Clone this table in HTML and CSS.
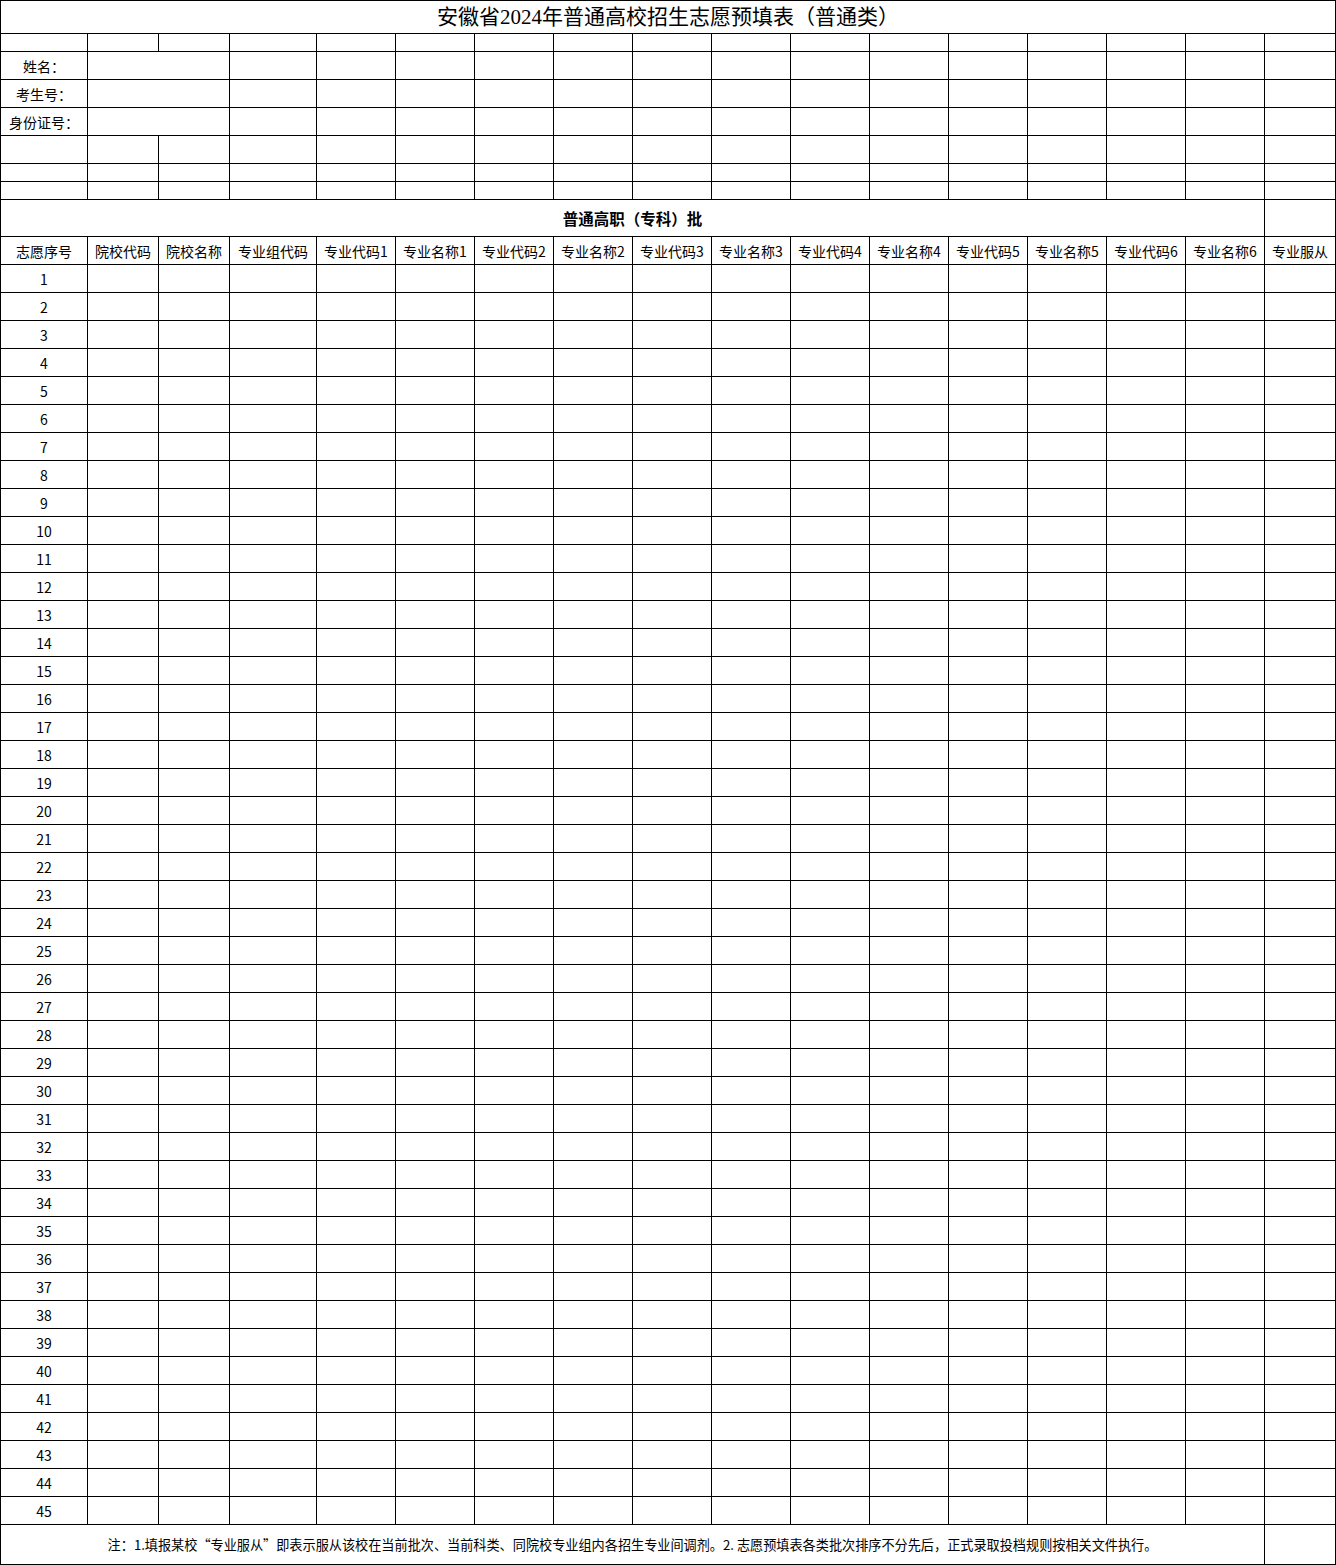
FILE: index.html
```html
<!DOCTYPE html>
<html lang="zh-CN">
<head>
<meta charset="utf-8">
<title>安徽省2024年普通高校招生志愿预填表（普通类）</title>
<link rel="stylesheet" href="styles.css">
</head>
<body>
<div class="sheet">
<span class="title">安徽省2024年普通高校招生志愿预填表（普通类）</span>
<span></span><span></span><span></span><span></span><span></span><span></span><span></span><span></span><span></span><span></span><span></span><span></span><span></span><span></span><span></span><span></span><span></span>
<span>姓名：</span><span class="w2"></span><span></span><span></span><span></span><span></span><span></span><span></span><span></span><span></span><span></span><span></span><span></span><span></span><span></span><span></span>
<span>考生号：</span><span class="w2"></span><span></span><span></span><span></span><span></span><span></span><span></span><span></span><span></span><span></span><span></span><span></span><span></span><span></span><span></span>
<span>身份证号：</span><span class="w2"></span><span></span><span></span><span></span><span></span><span></span><span></span><span></span><span></span><span></span><span></span><span></span><span></span><span></span><span></span>
<span></span><span></span><span></span><span></span><span></span><span></span><span></span><span></span><span></span><span></span><span></span><span></span><span></span><span></span><span></span><span></span><span></span>
<span></span><span></span><span></span><span></span><span></span><span></span><span></span><span></span><span></span><span></span><span></span><span></span><span></span><span></span><span></span><span></span><span></span>
<span></span><span></span><span></span><span></span><span></span><span></span><span></span><span></span><span></span><span></span><span></span><span></span><span></span><span></span><span></span><span></span><span></span>
<span class="batch">普通高职（专科）批</span><span></span>
<span>志愿序号</span><span>院校代码</span><span>院校名称</span><span>专业组代码</span><span>专业代码1</span><span>专业名称1</span><span>专业代码2</span><span>专业名称2</span><span>专业代码3</span><span>专业名称3</span><span>专业代码4</span><span>专业名称4</span><span>专业代码5</span><span>专业名称5</span><span>专业代码6</span><span>专业名称6</span><span>专业服从</span>
<span>1</span><span></span><span></span><span></span><span></span><span></span><span></span><span></span><span></span><span></span><span></span><span></span><span></span><span></span><span></span><span></span><span></span>
<span>2</span><span></span><span></span><span></span><span></span><span></span><span></span><span></span><span></span><span></span><span></span><span></span><span></span><span></span><span></span><span></span><span></span>
<span>3</span><span></span><span></span><span></span><span></span><span></span><span></span><span></span><span></span><span></span><span></span><span></span><span></span><span></span><span></span><span></span><span></span>
<span>4</span><span></span><span></span><span></span><span></span><span></span><span></span><span></span><span></span><span></span><span></span><span></span><span></span><span></span><span></span><span></span><span></span>
<span>5</span><span></span><span></span><span></span><span></span><span></span><span></span><span></span><span></span><span></span><span></span><span></span><span></span><span></span><span></span><span></span><span></span>
<span>6</span><span></span><span></span><span></span><span></span><span></span><span></span><span></span><span></span><span></span><span></span><span></span><span></span><span></span><span></span><span></span><span></span>
<span>7</span><span></span><span></span><span></span><span></span><span></span><span></span><span></span><span></span><span></span><span></span><span></span><span></span><span></span><span></span><span></span><span></span>
<span>8</span><span></span><span></span><span></span><span></span><span></span><span></span><span></span><span></span><span></span><span></span><span></span><span></span><span></span><span></span><span></span><span></span>
<span>9</span><span></span><span></span><span></span><span></span><span></span><span></span><span></span><span></span><span></span><span></span><span></span><span></span><span></span><span></span><span></span><span></span>
<span>10</span><span></span><span></span><span></span><span></span><span></span><span></span><span></span><span></span><span></span><span></span><span></span><span></span><span></span><span></span><span></span><span></span>
<span>11</span><span></span><span></span><span></span><span></span><span></span><span></span><span></span><span></span><span></span><span></span><span></span><span></span><span></span><span></span><span></span><span></span>
<span>12</span><span></span><span></span><span></span><span></span><span></span><span></span><span></span><span></span><span></span><span></span><span></span><span></span><span></span><span></span><span></span><span></span>
<span>13</span><span></span><span></span><span></span><span></span><span></span><span></span><span></span><span></span><span></span><span></span><span></span><span></span><span></span><span></span><span></span><span></span>
<span>14</span><span></span><span></span><span></span><span></span><span></span><span></span><span></span><span></span><span></span><span></span><span></span><span></span><span></span><span></span><span></span><span></span>
<span>15</span><span></span><span></span><span></span><span></span><span></span><span></span><span></span><span></span><span></span><span></span><span></span><span></span><span></span><span></span><span></span><span></span>
<span>16</span><span></span><span></span><span></span><span></span><span></span><span></span><span></span><span></span><span></span><span></span><span></span><span></span><span></span><span></span><span></span><span></span>
<span>17</span><span></span><span></span><span></span><span></span><span></span><span></span><span></span><span></span><span></span><span></span><span></span><span></span><span></span><span></span><span></span><span></span>
<span>18</span><span></span><span></span><span></span><span></span><span></span><span></span><span></span><span></span><span></span><span></span><span></span><span></span><span></span><span></span><span></span><span></span>
<span>19</span><span></span><span></span><span></span><span></span><span></span><span></span><span></span><span></span><span></span><span></span><span></span><span></span><span></span><span></span><span></span><span></span>
<span>20</span><span></span><span></span><span></span><span></span><span></span><span></span><span></span><span></span><span></span><span></span><span></span><span></span><span></span><span></span><span></span><span></span>
<span>21</span><span></span><span></span><span></span><span></span><span></span><span></span><span></span><span></span><span></span><span></span><span></span><span></span><span></span><span></span><span></span><span></span>
<span>22</span><span></span><span></span><span></span><span></span><span></span><span></span><span></span><span></span><span></span><span></span><span></span><span></span><span></span><span></span><span></span><span></span>
<span>23</span><span></span><span></span><span></span><span></span><span></span><span></span><span></span><span></span><span></span><span></span><span></span><span></span><span></span><span></span><span></span><span></span>
<span>24</span><span></span><span></span><span></span><span></span><span></span><span></span><span></span><span></span><span></span><span></span><span></span><span></span><span></span><span></span><span></span><span></span>
<span>25</span><span></span><span></span><span></span><span></span><span></span><span></span><span></span><span></span><span></span><span></span><span></span><span></span><span></span><span></span><span></span><span></span>
<span>26</span><span></span><span></span><span></span><span></span><span></span><span></span><span></span><span></span><span></span><span></span><span></span><span></span><span></span><span></span><span></span><span></span>
<span>27</span><span></span><span></span><span></span><span></span><span></span><span></span><span></span><span></span><span></span><span></span><span></span><span></span><span></span><span></span><span></span><span></span>
<span>28</span><span></span><span></span><span></span><span></span><span></span><span></span><span></span><span></span><span></span><span></span><span></span><span></span><span></span><span></span><span></span><span></span>
<span>29</span><span></span><span></span><span></span><span></span><span></span><span></span><span></span><span></span><span></span><span></span><span></span><span></span><span></span><span></span><span></span><span></span>
<span>30</span><span></span><span></span><span></span><span></span><span></span><span></span><span></span><span></span><span></span><span></span><span></span><span></span><span></span><span></span><span></span><span></span>
<span>31</span><span></span><span></span><span></span><span></span><span></span><span></span><span></span><span></span><span></span><span></span><span></span><span></span><span></span><span></span><span></span><span></span>
<span>32</span><span></span><span></span><span></span><span></span><span></span><span></span><span></span><span></span><span></span><span></span><span></span><span></span><span></span><span></span><span></span><span></span>
<span>33</span><span></span><span></span><span></span><span></span><span></span><span></span><span></span><span></span><span></span><span></span><span></span><span></span><span></span><span></span><span></span><span></span>
<span>34</span><span></span><span></span><span></span><span></span><span></span><span></span><span></span><span></span><span></span><span></span><span></span><span></span><span></span><span></span><span></span><span></span>
<span>35</span><span></span><span></span><span></span><span></span><span></span><span></span><span></span><span></span><span></span><span></span><span></span><span></span><span></span><span></span><span></span><span></span>
<span>36</span><span></span><span></span><span></span><span></span><span></span><span></span><span></span><span></span><span></span><span></span><span></span><span></span><span></span><span></span><span></span><span></span>
<span>37</span><span></span><span></span><span></span><span></span><span></span><span></span><span></span><span></span><span></span><span></span><span></span><span></span><span></span><span></span><span></span><span></span>
<span>38</span><span></span><span></span><span></span><span></span><span></span><span></span><span></span><span></span><span></span><span></span><span></span><span></span><span></span><span></span><span></span><span></span>
<span>39</span><span></span><span></span><span></span><span></span><span></span><span></span><span></span><span></span><span></span><span></span><span></span><span></span><span></span><span></span><span></span><span></span>
<span>40</span><span></span><span></span><span></span><span></span><span></span><span></span><span></span><span></span><span></span><span></span><span></span><span></span><span></span><span></span><span></span><span></span>
<span>41</span><span></span><span></span><span></span><span></span><span></span><span></span><span></span><span></span><span></span><span></span><span></span><span></span><span></span><span></span><span></span><span></span>
<span>42</span><span></span><span></span><span></span><span></span><span></span><span></span><span></span><span></span><span></span><span></span><span></span><span></span><span></span><span></span><span></span><span></span>
<span>43</span><span></span><span></span><span></span><span></span><span></span><span></span><span></span><span></span><span></span><span></span><span></span><span></span><span></span><span></span><span></span><span></span>
<span>44</span><span></span><span></span><span></span><span></span><span></span><span></span><span></span><span></span><span></span><span></span><span></span><span></span><span></span><span></span><span></span><span></span>
<span>45</span><span></span><span></span><span></span><span></span><span></span><span></span><span></span><span></span><span></span><span></span><span></span><span></span><span></span><span></span><span></span><span></span>
<span class="note">注：1.填报某校“专业服从”即表示服从该校在当前批次、当前科类、同院校专业组内各招生专业间调剂。2. 志愿预填表各类批次排序不分先后，正式录取投档规则按相关文件执行。</span><span></span>
</div>
</body>
</html>
```

FILE: styles.css
```css
html, body {
  margin: 0;
  padding: 0;
  background: #fff;
}

.sheet {
  display: grid;
  box-sizing: border-box;
  width: 1336px;
  border: 1px solid #000;
  background: #000;
  gap: 1px;
  grid-template-columns: 86px 70px 70px 86px repeat(12, 78px) 70px;
  grid-template-rows: 32px 17px 27px 27px 27px 27px 17px 17px 36px 27px repeat(45, 27px) 39px;
  font-family: "Noto Sans CJK SC", "Noto Sans", sans-serif;
  font-size: 14px;
  color: #000;
}

.sheet > span {
  display: flex;
  align-items: center;
  justify-content: center;
  background: #fff;
  white-space: nowrap;
  overflow: hidden;
  line-height: 1;
}

.sheet > .title {
  grid-column: 1 / -1;
  font-family: "Liberation Serif", "Noto Sans CJK SC", serif;
  font-size: 21px;
}

.sheet > .w2 {
  grid-column: span 2;
}

.sheet > .batch {
  grid-column: span 16;
  font-size: 15.5px;
  font-weight: bold;
  padding-top: 2px;
  box-sizing: border-box;
}

.sheet > .note {
  grid-column: span 16;
  font-size: 13.15px;
}
```
